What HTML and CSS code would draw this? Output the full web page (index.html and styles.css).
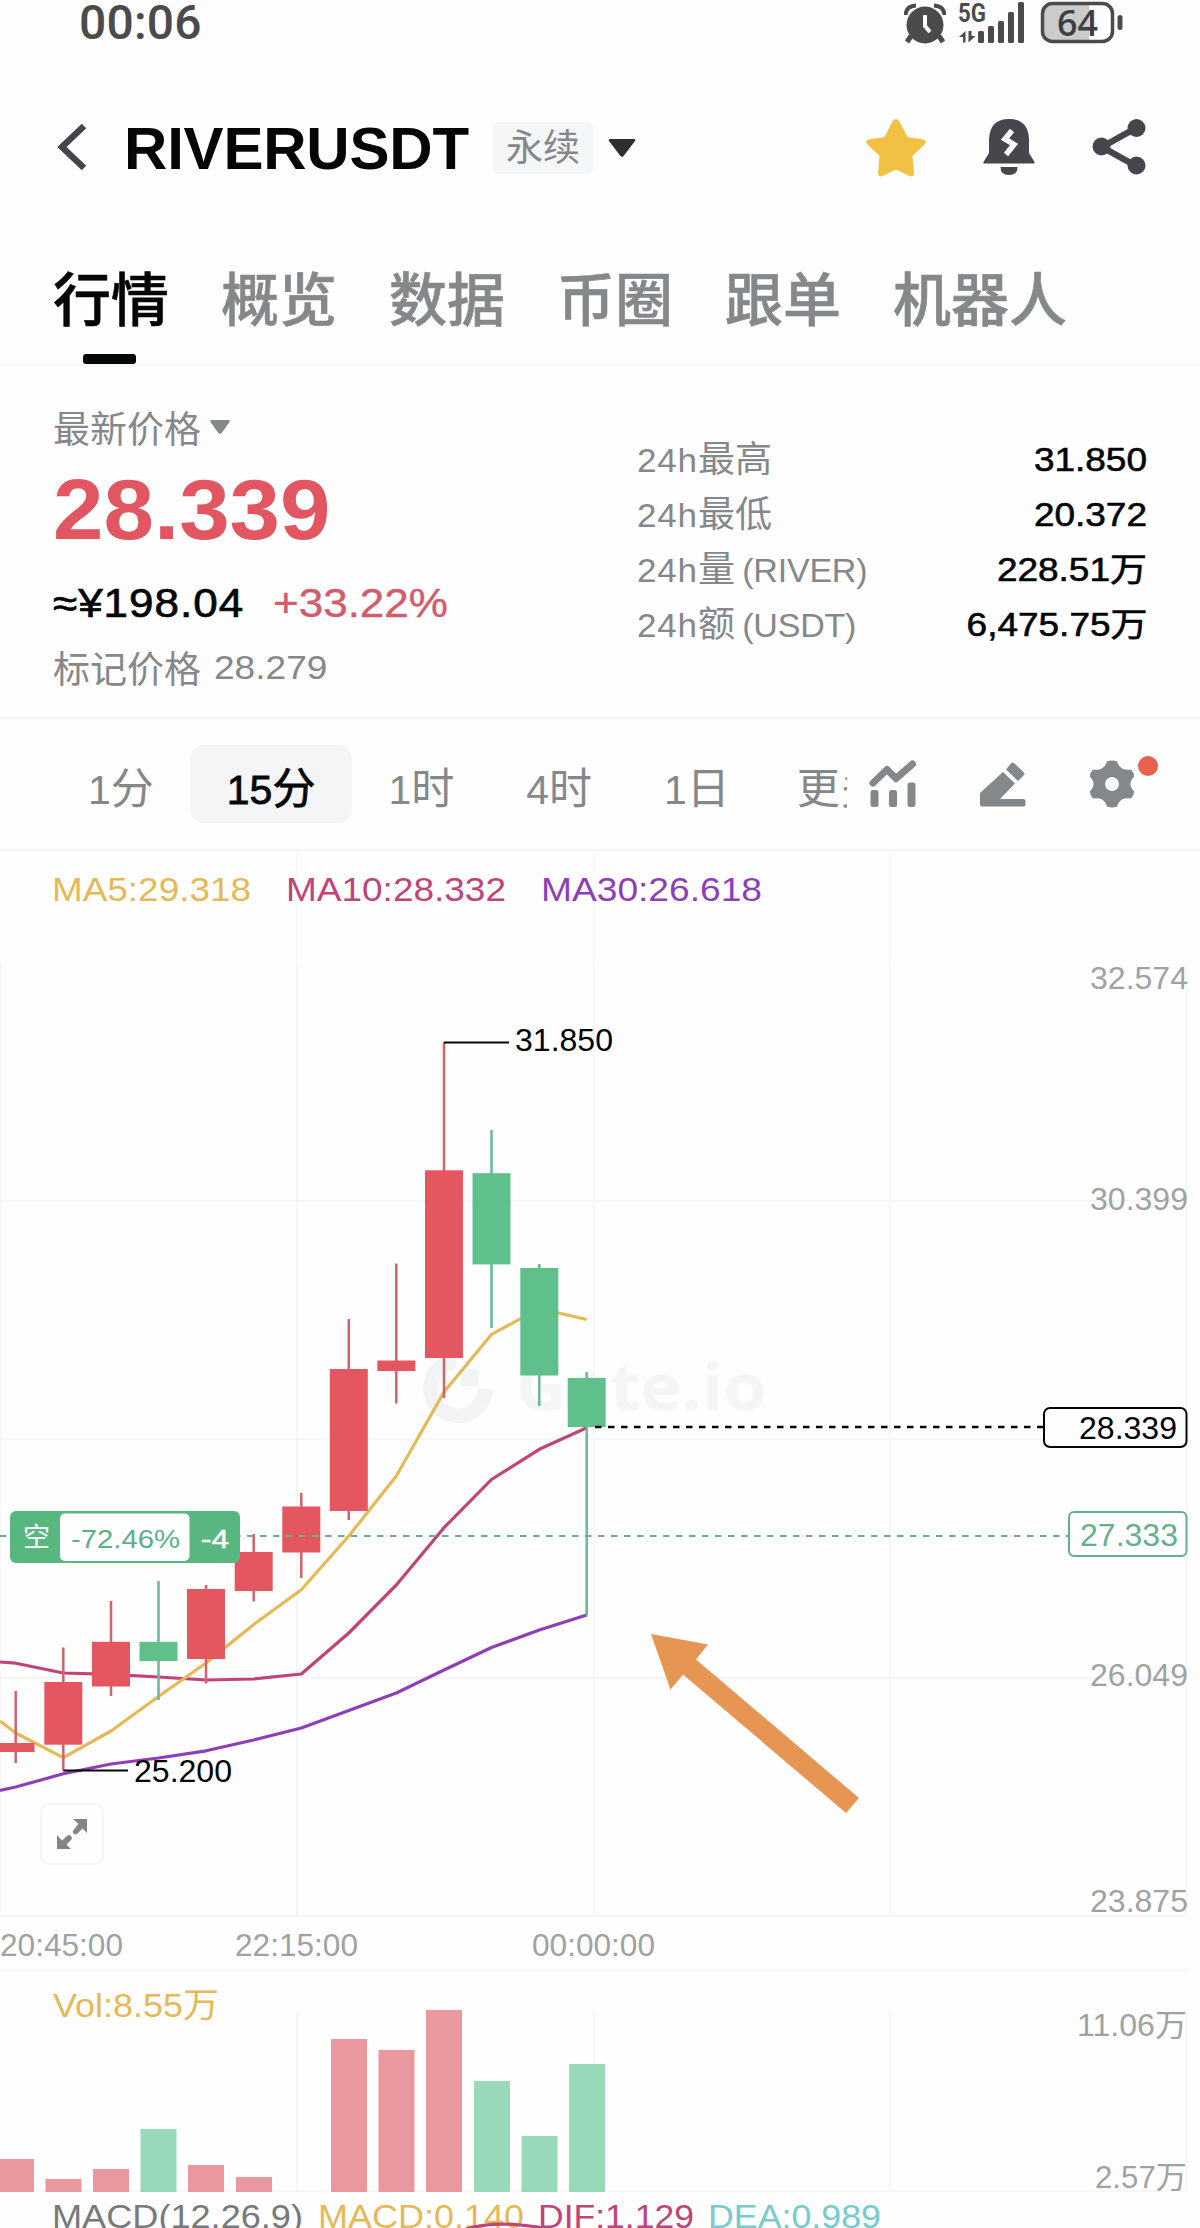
FILE: index.html
```html
<!DOCTYPE html>
<html lang="zh-CN">
<head>
    <meta charset="UTF-8">
    <title>RIVERUSDT 永续</title>
    <link rel="stylesheet" href="styles.css">
</head>
<body>
    <div class="status-bar">
        <span class="clock">00:06</span>
        <div class="status-icons">
            <svg class="alarm" width="42" height="44" viewBox="0 0 42 44">
                <circle cx="21" cy="25" r="18.5" fill="#4b4b4b"/>
                <path d="M1.5 15Q2 6 12 5.500M40.500 15Q40 6 30 5.500" fill="none" stroke="#4b4b4b" stroke-width="4"/>
                <path d="M7 36l-4 6M35 36l4 6" stroke="#4b4b4b" stroke-width="5"/>
                <path d="M21 15v11l5 6" fill="none" stroke="#fefefe" stroke-width="4"/>
            </svg>
            <svg class="signal" width="68" height="44" viewBox="0 0 68 44">
                <text class="signal-text" x="0" y="22" textLength="28" lengthAdjust="spacingAndGlyphs">5G</text>
                <path d="M7.500 31v11.500h-2.500v-5.500H1zM10.500 31v11.500l7-6.500h-4V31z" fill="#4b4b4b"/>
                <g fill="#4b4b4b">
                    <rect x="20" y="31" width="6" height="12" rx="1.500"/>
                    <rect x="30" y="26" width="6" height="17" rx="1.500"/>
                    <rect x="40" y="21" width="6" height="22" rx="1.500"/>
                    <rect x="50" y="12" width="6" height="31" rx="1.500"/>
                    <rect x="60" y="2" width="6" height="41" rx="1.500"/>
                </g>
            </svg>
            <svg class="battery" width="84" height="44" viewBox="0 0 84 44">
                <path d="M14 4h35v37H14Q4 41 4 30V15Q4 4 14 4z" fill="#cbcbcb"/>
                <rect x="2.500" y="3.500" width="70" height="38" rx="10" fill="none" stroke="#4b4b4b" stroke-width="3.500"/>
                <rect x="77.500" y="15" width="5" height="15" rx="2.500" fill="#4b4b4b"/>
                <text class="battery-text" x="17" y="35.500" textLength="41" lengthAdjust="spacingAndGlyphs">64</text>
            </svg>
        </div>
    </div>

    <header class="header">
        <svg class="back" width="31" height="50" viewBox="0 0 31 50">
            <path d="M27 3L5 24l22 21" fill="none" stroke="#44444a" stroke-width="6.500"/>
        </svg>
        <h1 class="pair">RIVERUSDT</h1>
        <span class="tag">永续</span>
        <svg class="caret" width="28" height="20" viewBox="0 0 28 20">
            <path d="M2 1h24q2 0 1 2L16 17.500q-2 2.500-4 0L1 3q-1-2 1-2z" fill="#2d2e30"/>
        </svg>
        <div class="header-icons">
            <svg width="60" height="60" viewBox="0 0 60 60">
                <path d="M26.500 3.500q3.500-5 7 0l8 15.500 16 2.500q4 1.500 1 5L46.500 38l1.500 18q0 3.500-4.500 2L30 51.500 16.500 58q-4 1.500-4.500-2l1.500-18L1.500 26.500q-3-3.500 1-5l16-2.500z" fill="#f2c043"/>
            </svg>
            <svg width="52" height="60" viewBox="0 0 52 60">
                <path d="M6 21Q7 1 26 1t20 20v14l5.500 9q.5 1.500-1 1.500h-49q-1.500 0-1-1.500L6 35z" fill="#46474d"/>
                <path d="M17.500 49h17q0 8-8.500 8t-8.500-8z" fill="#46474d"/>
                <path d="M29 12.500l-7 8.500 9 5.500-8 10" fill="none" stroke="#fefefe" stroke-width="5.500"/>
            </svg>
            <svg width="54" height="60" viewBox="0 0 54 60">
                <path d="M44 10L10 29l34 19" fill="none" stroke="#46474d" stroke-width="6.500"/>
                <g fill="#46474d">
                    <circle cx="44.500" cy="10" r="9"/>
                    <circle cx="9.500" cy="28.500" r="9"/>
                    <circle cx="44.500" cy="47.500" r="9"/>
                </g>
            </svg>
        </div>
    </header>

    <nav class="tabs">
        <span class="tab active">行情</span>
        <span class="tab">概览</span>
        <span class="tab">数据</span>
        <span class="tab">币圈</span>
        <span class="tab">跟单</span>
        <span class="tab">机器人</span>
    </nav>

    <section class="summary">
        <div class="price-block">
            <div class="price-type">最新价格
                <svg width="20" height="14" viewBox="0 0 20 14"><path d="M1.500 0h17q2 0 1 2L12 12.500q-2 2.500-4 0L.5 2q-1-2 1-2z" fill="#85888a"/></svg>
            </div>
            <div class="last-price">28.339</div>
            <div class="fiat"><span class="cny">≈¥198.04</span><span class="change">+33.22%</span></div>
            <div class="mark">标记价格 <span class="mark-value">28.279</span></div>
        </div>
        <div class="stats">
            <div class="stat"><span class="label">24h<b>最高</b></span><span class="value">31.850</span></div>
            <div class="stat"><span class="label">24h<b>最低</b></span><span class="value">20.372</span></div>
            <div class="stat"><span class="label">24h<b>量</b><span class="unit">(RIVER)</span></span><span class="value">228.51<b>万</b></span></div>
            <div class="stat"><span class="label">24h<b>额</b><span class="unit">(USDT)</span></span><span class="value">6,475.75<b>万</b></span></div>
        </div>
    </section>

    <div class="intervals">
        <div class="interval-list">
            <span class="interval">1<b>分</b></span>
            <span class="interval selected">15<b>分</b></span>
            <span class="interval">1<b>时</b></span>
            <span class="interval">4<b>时</b></span>
            <span class="interval">1<b>日</b></span>
            <span class="interval more"><b>更多</b></span>
        </div>
        <div class="tools">
            <svg width="48" height="48" viewBox="0 0 48 48">
                <path d="M4 23L18 9.500l9 9L43.500 4" fill="none" stroke="#85888a" stroke-width="7" stroke-linecap="round" stroke-linejoin="round"/>
                <g fill="#85888a">
                    <rect x="1.500" y="30" width="8" height="17" rx="2.500"/>
                    <rect x="20" y="30" width="8" height="17" rx="2.500"/>
                    <rect x="38.500" y="22.500" width="8" height="24.500" rx="2.500"/>
                </g>
            </svg>
            <svg width="46" height="48" viewBox="0 0 46 48">
                <path d="M0 33L23 12l12 11.500L20 39h23.500q2 0 2 2v3.500q0 2-2 2H2q-2 0-2-2z" fill="#85888a"/>
                <path d="M26 9.500l5-6q1.500-2 3.500 0L43.500 12q2 2 0 3.500L38 21z" fill="#85888a"/>
            </svg>
            <div class="settings">
                <svg width="46" height="48" viewBox="0 0 46 48">
                    <path d="M18 1.500q5-2 10 0 1.500 5 5 7 4 2 9 1 3.500 3.500 3 7.500-3.500 3-3.500 7t3.500 7q.5 4-3 7.500-5-1-9 1-3.500 2-5 7-5 2-10 0-1.500-5-5-7-4-2-9-1Q.5 35 1 31q3.500-3 3.500-7T1 17q-.5-4 3-7.500 5 1 9-1 3.500-2 5-7zM23 17a7 7 0 1 0 0 14 7 7 0 1 0 0-14z" fill="#85888a" fill-rule="evenodd"/>
                </svg>
                <i class="dot"></i>
            </div>
        </div>
    </div>

    <svg class="chart" width="1200" height="1377" viewBox="0 851 1200 1377">
        <!-- grid -->
        <path class="grid faint" d="M297 851V962M594 851V962M890 851V962"/>
        <path class="grid" d="M0 962V1916M297 962V1916M594 962V1916M890 962V1916M1186.500 962V1916
            M0 1201H1187M0 1439H1187M0 1678H1187M0 1916H1187M0 1970.500H1187M0 2191H1187
            M297 2012V2191M594 2012V2191M890 2012V2191M1186.500 2012V2191"/>

        <!-- watermark -->
        <path d="M456 1353A35 35 0 1 0 493 1389H478A20 20 0 1 1 456 1368.500z" fill="#f1f3f4"/>
        <path d="M461 1369h17v17h-17z" fill="#f1f3f4"/>
        <text class="watermark" x="516" y="1410" textLength="251" lengthAdjust="spacingAndGlyphs">Gate.io</text>

        <!-- moving averages -->
        <polyline class="ma ma30" points="0,1790.500 15.700,1787 63.300,1773.800 111,1764 158.500,1758 206,1750.800 253.700,1740 301.300,1728 348.800,1710.600 396.300,1693 444,1670 491.500,1647.500 539.300,1630 586.700,1615"/>
        <polyline class="ma ma10" points="0,1662 15.700,1663.200 63.300,1673 111,1674.300 158.500,1677 206,1680 253.700,1679 301.300,1674 348.800,1633 396.300,1585 444,1527.700 491.500,1479.500 539.300,1449.300 586.700,1427.800"/>
        <polyline class="ma ma5" points="0,1720.900 15.700,1733 63.300,1757.700 111,1731 158.500,1696.500 206,1663 253.700,1624.500 301.300,1589.700 348.800,1536 396.300,1476 444,1392 491.500,1334.400 539.300,1308.500 586.700,1319.500"/>

        <!-- candles -->
        <g class="red">
            <path class="wick" d="M15.700 1691V1763M63.300 1647.500V1770.500M111 1601V1696M206 1585V1683.500M253.700 1534V1601.500M301.300 1493V1578M348.800 1319V1520M396.300 1263.500V1403.500M444 1042V1398"/>
            <rect x="-3.500" y="1743" width="38" height="9"/>
            <rect x="44.300" y="1682" width="38" height="62.700"/>
            <rect x="92" y="1641.800" width="38" height="44.700"/>
            <rect x="187" y="1589" width="38" height="70"/>
            <rect x="234.700" y="1552" width="38" height="39"/>
            <rect x="282.300" y="1506.500" width="38" height="46"/>
            <rect x="329.800" y="1369" width="38" height="142"/>
            <rect x="377.300" y="1360.500" width="38" height="10.500"/>
            <rect x="425" y="1170.300" width="38" height="187.700"/>
        </g>
        <g class="green">
            <path class="wick" d="M158.500 1581V1700M491.500 1130V1328M539.300 1264V1406M586.700 1372V1615.500"/>
            <rect x="139.500" y="1641.800" width="38" height="19.200"/>
            <rect x="472.500" y="1173.200" width="38" height="91.200"/>
            <rect x="520.300" y="1268" width="38" height="107.500"/>
            <rect x="567.700" y="1378" width="38" height="49"/>
        </g>

        <!-- high / low marks -->
        <path class="mark-line" d="M444 1042.500H509M63.300 1770.500H128"/>
        <text class="extreme" x="515" y="1051" textLength="98" lengthAdjust="spacingAndGlyphs">31.850</text>
        <text class="extreme" x="134" y="1782" textLength="98" lengthAdjust="spacingAndGlyphs">25.200</text>

        <!-- last price and position lines -->
        <path class="last-line" d="M595 1427H1043"/>
        <path class="position-line" d="M0 1536H1068"/>
        <rect class="price-tag" x="1044" y="1408" width="142.500" height="39" rx="6"/>
        <text class="tag-text" x="1177" y="1439" textLength="98" lengthAdjust="spacingAndGlyphs">28.339</text>
        <rect class="price-tag green-tag" x="1069" y="1512" width="117.500" height="44" rx="5"/>
        <text class="tag-text green-text" x="1178" y="1546" textLength="98" lengthAdjust="spacingAndGlyphs">27.333</text>

        <rect x="10" y="1511" width="230" height="52" rx="6" fill="#58b781"/>
        <rect x="60" y="1513.500" width="129.500" height="47.500" rx="5" fill="#fefefe"/>
        <text class="side" x="23" y="1547">空</text>
        <text class="pnl" x="71" y="1547.500" textLength="109" lengthAdjust="spacingAndGlyphs">-72.46%</text>
        <text class="pnl qty" x="201" y="1547.500" textLength="28" lengthAdjust="spacingAndGlyphs">-4</text>

        <!-- arrow -->
        <path d="M651 1634L708 1644.500 696 1659.500 859 1798 846 1813 683 1674.500 670.500 1689.500z" fill="#e69553"/>

        <!-- fullscreen button -->
        <rect x="41" y="1804" width="62" height="60" rx="8" fill="#fefefe" stroke="#f5f6f6" stroke-width="2"/>
        <path d="M73 1819h14v14l-4.500-4.500-5.500 5.500q-2 1-3.500-.5-1.500-2 0-3.500l5-6zM57 1835v14h14l-4.500-4.500 5-5q1-2-.5-3.500-2-1.500-3.500-.5l-5.500 5z" fill="#858585"/>

        <!-- legends -->
        <text class="legend c5" x="52" y="901" textLength="199" lengthAdjust="spacingAndGlyphs">MA5:29.318</text>
        <text class="legend c10" x="286" y="901" textLength="220" lengthAdjust="spacingAndGlyphs">MA10:28.332</text>
        <text class="legend c30" x="541" y="901" textLength="221" lengthAdjust="spacingAndGlyphs">MA30:26.618</text>

        <!-- price axis -->
        <g class="axis right">
            <text x="1188" y="989" textLength="98" lengthAdjust="spacingAndGlyphs">32.574</text>
            <text x="1188" y="1210" textLength="98" lengthAdjust="spacingAndGlyphs">30.399</text>
            <text x="1188" y="1686" textLength="98" lengthAdjust="spacingAndGlyphs">26.049</text>
            <text x="1188" y="1912" textLength="98" lengthAdjust="spacingAndGlyphs">23.875</text>
            <text x="1187" y="2036" textLength="110" lengthAdjust="spacingAndGlyphs">11.06万</text>
            <text x="1187" y="2188" textLength="92" lengthAdjust="spacingAndGlyphs">2.57万</text>
        </g>
        <g class="axis">
            <text x="0" y="1956" textLength="123" lengthAdjust="spacingAndGlyphs">20:45:00</text>
            <text x="235" y="1956" textLength="123" lengthAdjust="spacingAndGlyphs">22:15:00</text>
            <text x="532" y="1956" textLength="123" lengthAdjust="spacingAndGlyphs">00:00:00</text>
        </g>

        <!-- volume -->
        <text class="legend c5" x="53" y="2017" textLength="166" lengthAdjust="spacingAndGlyphs">Vol:8.55万</text>
        <g fill="#ea989f">
            <rect x="-2" y="2159" width="36" height="33"/>
            <rect x="45.500" y="2179" width="36" height="13"/>
            <rect x="93" y="2169" width="36" height="23"/>
            <rect x="188" y="2165" width="36" height="27"/>
            <rect x="236" y="2177" width="36" height="15"/>
            <rect x="331" y="2039" width="36" height="153"/>
            <rect x="378.500" y="2050" width="36" height="142"/>
            <rect x="426" y="2010" width="36" height="182"/>
        </g>
        <g fill="#97d9b9">
            <rect x="140.500" y="2129" width="36" height="63"/>
            <rect x="474" y="2081" width="36" height="111"/>
            <rect x="521.500" y="2136" width="36" height="56"/>
            <rect x="569" y="2064" width="36" height="128"/>
        </g>

        <!-- macd -->
        <text class="legend cm" x="52" y="2228" textLength="251" lengthAdjust="spacingAndGlyphs">MACD(12.26.9)</text>
        <text class="legend c5" x="318" y="2228" textLength="206" lengthAdjust="spacingAndGlyphs">MACD:0.140</text>
        <text class="legend c10" x="538" y="2228" textLength="156" lengthAdjust="spacingAndGlyphs">DIF:1.129</text>
        <text class="legend cd" x="708" y="2228" textLength="173" lengthAdjust="spacingAndGlyphs">DEA:0.989</text>
        <path class="ma ma10" d="M466 2229Q490 2222 520 2225T552 2230"/>
    </svg>
</body>
</html>
```
FILE: styles.css
```css
* {
    box-sizing: border-box;
}
body {
    margin: 0;
    width: 1200px;
    height: 2228px;
    overflow: hidden;
    background-color: #fefefe;
    font-family: "Liberation Sans", Arial, "Noto Sans CJK SC", sans-serif;
    color: #050606;
}
svg {
    display: block;
    flex: none;
}
b {
    font-weight: inherit;
    letter-spacing: 0;
}

/* status bar */
.status-bar {
    display: flex;
    justify-content: space-between;
    height: 56px;
    padding: 0 76px 0 79px;
}
.clock {
    font-family: Roboto, sans-serif;
    font-size: 48px;
    font-weight: 500;
    line-height: 46px;
    letter-spacing: 0.2px;
    color: #4b4b4b;
}
.status-icons {
    display: flex;
}
.alarm {
    margin-right: 12px;
}
.signal {
    margin-right: 14px;
}
.signal-text {
    font: 700 26px Roboto, sans-serif;
    fill: #4b4b4b;
}
.battery-text {
    font: 600 36px "Open Sans", sans-serif;
    fill: #3f3f3f;
}

/* header */
.header {
    display: flex;
    align-items: center;
    height: 184px;
    padding: 0 54px 0 57px;
}
.pair {
    margin: 0 0 0 36px;
    font: 700 60px "Liberation Sans", Arial, sans-serif;
    letter-spacing: -0.2px;
}
.tag {
    margin-left: 24px;
    width: 100px;
    height: 52px;
    border-radius: 6px;
    background-color: #f4f6f7;
    color: #85888a;
    font-size: 37px;
    line-height: 54px;
    text-align: center;
}
.caret {
    margin-left: 15px;
}
.header-icons {
    display: flex;
    gap: 57px;
    margin-left: auto;
}

/* tabs */
.tabs {
    display: flex;
    gap: 52px;
    height: 126px;
    padding: 0 53px;
    border-bottom: 2px solid #f5f5f6;
}
.tab {
    position: relative;
    font-size: 58px;
    font-weight: 500;
    line-height: 121px;
    color: #85888a;
    -webkit-text-stroke: 0.6px currentColor;
}
.tab.active {
    color: #050606;
}
.tab.active::after {
    content: "";
    position: absolute;
    left: 30px;
    bottom: 0;
    width: 53px;
    height: 10px;
    border-radius: 3px;
    background-color: #050606;
}

/* price summary */
.summary {
    display: flex;
    justify-content: space-between;
    height: 353px;
    padding: 0 53px 0 53px;
    border-bottom: 2px solid #f4f5f5;
}
.price-block {
    padding-top: 34px;
}
.price-type,
.mark {
    display: flex;
    align-items: center;
    height: 54px;
    font-size: 37px;
    color: #85888a;
}
.price-type svg {
    margin-left: 9px;
}
.last-price {
    height: 108px;
    font-size: 86px;
    font-weight: 700;
    line-height: 110px;
    transform: scaleX(1.055);
    transform-origin: left;
    color: #e15661;
}
.fiat {
    display: flex;
    height: 78px;
    font-size: 40px;
    line-height: 82px;
    transform: scaleX(1.1);
    transform-origin: left;
    -webkit-text-stroke: 0.7px currentColor;
}
.cny {
    width: 200px;
    letter-spacing: 0.9px;
}
.change {
    color: #d15c6d;
    -webkit-text-stroke: 0.4px currentColor;
}
.mark-value {
    margin-left: 13px;
    font-size: 34px;
    line-height: 58px;
    transform: scaleX(1.09);
    transform-origin: left;
}
.stats {
    width: 510px;
    padding-top: 66px;
}
.stat {
    display: flex;
    justify-content: space-between;
    height: 55px;
    font-size: 33px;
    line-height: 55px;
    white-space: nowrap;
}
.label {
    color: #85888a;
    font-size: 34px;
    letter-spacing: 0.8px;
    transform: scaleX(1.03);
    transform-origin: left;
}
.label b {
    font-size: 36px;
}
.unit {
    margin-left: 7px;
    font-size: 33px;
    letter-spacing: -0.2px;
}
.value {
    transform: scaleX(1.12);
    transform-origin: right;
    -webkit-text-stroke: 0.6px currentColor;
}

/* interval bar */
.intervals {
    display: flex;
    justify-content: space-between;
    align-items: center;
    height: 132px;
    padding: 0 65px 0 52px;
    border-bottom: 2px solid #f4f5f5;
}
.interval-list {
    display: flex;
    width: 795px;
    overflow: hidden;
    white-space: nowrap;
}
.interval {
    flex: none;
    height: 78px;
    padding: 0 36px;
    border-radius: 14px;
    font-size: 41px;
    line-height: 89px;
    color: #85888a;
}
.interval b {
    font-size: 43px;
}
.interval.selected {
    padding: 0 37px;
    background-color: #f4f5f7;
    color: #050606;
    -webkit-text-stroke: 0.8px currentColor;
}
.interval.more {
    padding-left: 31px;
}
.tools {
    display: flex;
    gap: 63px;
}
.settings {
    position: relative;
}
.dot {
    position: absolute;
    left: 49px;
    top: -4px;
    width: 20px;
    height: 20px;
    border-radius: 50%;
    background-color: #e8604e;
}

/* chart */
.grid {
    fill: none;
    stroke: #f6f6f7;
    stroke-width: 2;
}
.grid.faint {
    stroke: #fafafa;
}
.watermark {
    font-family: "Open Sans", sans-serif;
    font-size: 64px;
    font-weight: 700;
    fill: #f4f5f5;
}
.ma {
    fill: none;
    stroke-width: 3.2;
    stroke-linejoin: round;
}
.ma5 { stroke: #e5b955; }
.ma10 { stroke: #c0437a; }
.ma30 { stroke: #8d3fb8; }
.red { fill: #e45660; }
.green { fill: #60c08c; }
.wick {
    stroke-width: 2.5;
}
.red .wick { stroke: #d2636c; }
.green .wick { stroke: #68b992; }
.mark-line {
    stroke: #050606;
    stroke-width: 2;
}
.extreme,
.axis text,
.tag-text {
    font-size: 31px;
}
.tag-text,
.axis.right text {
    text-anchor: end;
}
.axis {
    fill: #9fa2a3;
}
.last-line {
    stroke: #050606;
    stroke-width: 2.5;
    stroke-dasharray: 6.5 6.5;
}
.position-line {
    stroke: #6bae8f;
    stroke-width: 2;
    stroke-dasharray: 6.5 6.5;
}
.price-tag {
    fill: #fefefe;
    stroke: #050606;
    stroke-width: 2;
}
.green-tag {
    stroke: #64b08b;
}
.green-text {
    fill: #64b08b;
}
.side {
    font-size: 27px;
    fill: #fefefe;
}
.pnl {
    font-size: 26px;
    fill: #5bb088;
}
.pnl.qty {
    fill: #fefefe;
    stroke: #fefefe;
    stroke-width: 0.5;
}
.legend {
    font-size: 34px;
}
.c5 { fill: #e5b955; }
.c10 { fill: #c0437a; }
.c30 { fill: #8d3fb8; }
.cm { fill: #77797b; }
.cd { fill: #76ccca; }
```
